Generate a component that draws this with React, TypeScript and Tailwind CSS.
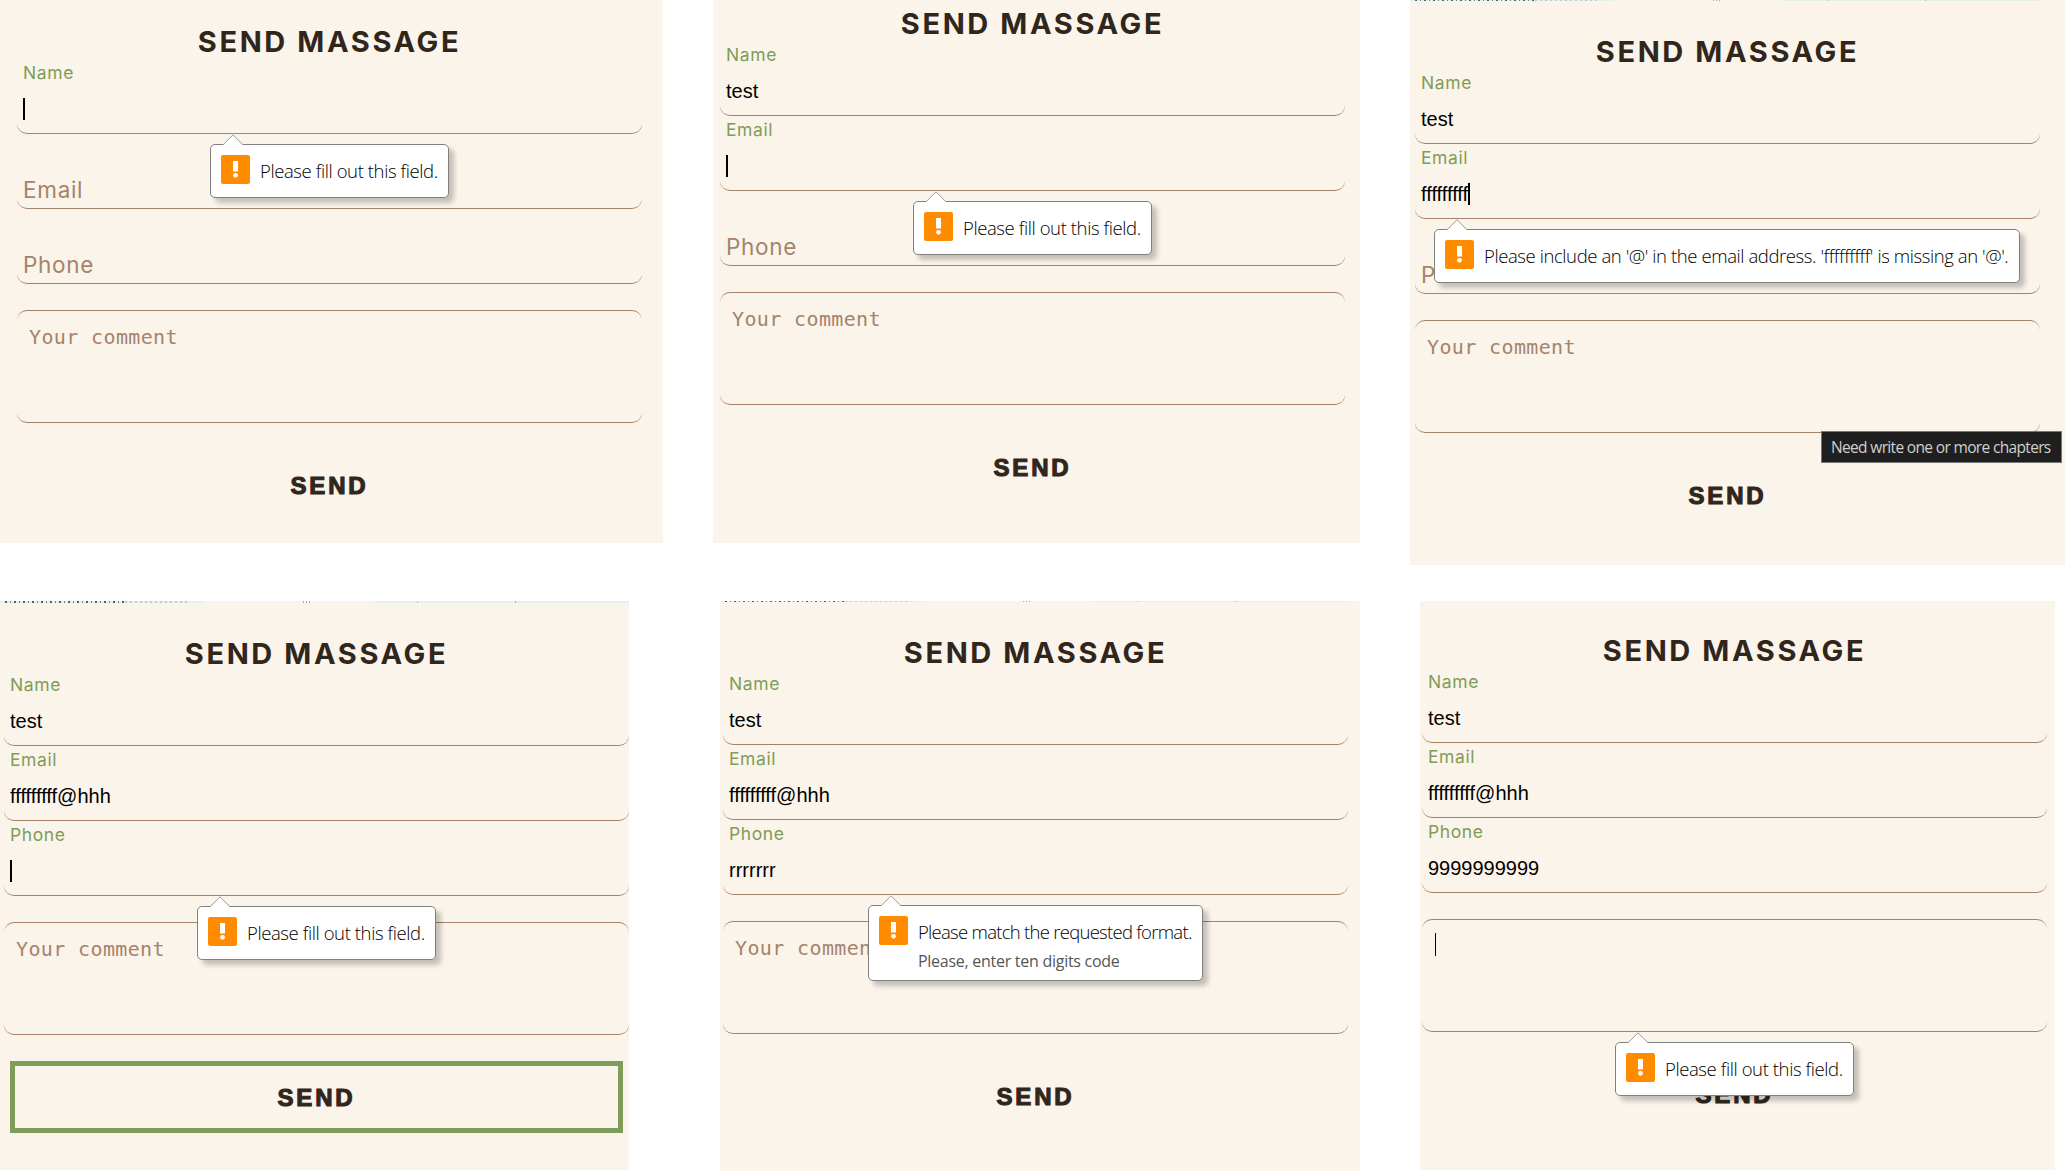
import type { ReactNode } from "react";

function Caret() {
  return <span className="h-[22px] w-[2px] bg-black" />;
}

function Field({ label, value, active = true, caret = false, children }: {
  label: string; value?: string; active?: boolean; caret?: boolean; children?: ReactNode;
}) {
  return (
    <div className="relative h-[75px] rounded-[10px] border-b border-[#a5836a] px-[6px]">
      {active ? (
        <>
          <div className="h-[28px] font-['Inter'] text-[17.5px] leading-[28px] tracking-[0.6px] text-[#7f9c58]">{label}</div>
          <div className="flex h-[44px] items-center font-['Liberation_Sans'] text-[20px] leading-[44px] text-black">
            {value && <span>{value}</span>}
            {caret && <Caret />}
          </div>
        </>
      ) : (
        <div className="pt-[38px] font-['Inter'] text-[22.5px] leading-[36px] tracking-[0.7px] text-[#a5836a]">{label}</div>
      )}
      {children}
    </div>
  );
}

function Bubble({ text, note, className }: { text: string; note?: string; className: string }) {
  return (
    <div className={`absolute z-10 rounded-[5px] border border-[#808080] bg-white shadow-[5px_5px_5px_rgba(0,0,0,0.22)] ${className}`}>
      <svg className="absolute -top-[11px] left-[11px]" width="22" height="12" viewBox="0 0 22 12">
        <path d="M1 12V11L11 0.8L21 11V12Z" fill="#fff" />
        <path d="M1 10.8L11 0.8L21 10.8" fill="none" stroke="#9a9a9a" />
      </svg>
      <div className="flex pl-[10px] pt-[10px]">
        <svg className="shrink-0" width="29" height="29" viewBox="0 0 29 29">
          <rect width="29" height="29" rx="2" fill="#ff8c00" />
          <path d="M12 6h5v10.5h-5z" fill="#fff" />
          <circle cx="14.5" cy="20.3" r="2.4" fill="#fff" />
        </svg>
        <div className="-mt-px ml-[10px] whitespace-nowrap font-['Open_Sans'] text-black">
          <div className="text-[18.5px] leading-[34px] [font-weight:350]">{text}</div>
          {note && <div className="mt-px text-[16px] leading-[22px] tracking-[-0.27px] text-[#555]">{note}</div>}
        </div>
      </div>
    </div>
  );
}

function Title() {
  return (
    <h2 className="h-[35px] text-center font-['Inter'] text-[29px] font-bold leading-[35px] tracking-[2.6px] text-[#30261c]">
      SEND MASSAGE
    </h2>
  );
}

function Comment({ caret = false, children }: { caret?: boolean; children?: ReactNode }) {
  return (
    <div className="relative mt-[26px] h-[113px] rounded-[10px] border-y border-[#a5836a] px-[12px] pt-[12px]">
      {caret ? (
        <div className="ml-[1px] mt-px h-[23px] w-px bg-black" />
      ) : (
        <div className="font-['DejaVu_Sans_Mono'] text-[20px] leading-[29px] tracking-[0.37px] text-[#a5836a]">Your comment</div>
      )}
      {children}
    </div>
  );
}

function Send({ outlined = false }: { outlined?: boolean }) {
  return (
    <button
      className={`mx-[6px] mt-[26px] flex h-[72px] w-[613px] items-center justify-center border-[5px] pt-[2px] font-['Liberation_Sans'] text-[24px] font-bold tracking-[2.8px] text-[#30261c] [-webkit-text-stroke:1.1px_#30261c] ${outlined ? "border-[#7f9c58]" : "border-transparent"}`}
    >
      SEND
    </button>
  );
}

function Sliver({ className }: { className: string }) {
  return (
    <div className={`absolute left-0 top-0 flex overflow-hidden bg-[#e6f0ea] ${className}`}>
      <div className="w-[5px]" />
      <div className="w-[120px] bg-[repeating-linear-gradient(90deg,#4f6469_0_2px,#e6f0ea_2px_5px,#71858a_5px_6px,#e6f0ea_6px_9px)]" />
      <div className="w-[62px] bg-[repeating-linear-gradient(90deg,#c3cccf_0_2px,#e6f0ea_2px_5px)]" />
      <div className="w-[16px]" />
      <div className="w-[100px] bg-[#f4f4f2]" />
      <div className="w-[8px] bg-[repeating-linear-gradient(90deg,#a9a9a9_0_1px,#f4f4f2_1px_3px)]" />
      <div className="w-[64px] bg-[#f4f4f2]" />
      <div className="w-[42px]" />
      <div className="w-px bg-[#b9c4be]" />
      <div className="w-[97px]" />
      <div className="w-px bg-[#a9b4ae]" />
    </div>
  );
}

const FILL = "Please fill out this field.";

export default function App() {
  return (
    <main className="flex h-[1171px] w-[2065px] flex-col gap-[36px] overflow-hidden bg-white">
      <div className="flex h-[565px] items-start">
        <section className="h-[543px] w-[663px] bg-[#fbf4ea] pl-[17px] pt-[24px]">
          <div className="w-[625px]">
            <Title />
            <Field label="Name" caret>
              <Bubble text={FILL} className="left-[193px] top-[85px] h-[54px] w-[239px] tracking-[-0.4px]" />
            </Field>
            <Field label="Email" active={false} />
            <Field label="Phone" active={false} />
            <Comment />
            <Send />
          </div>
        </section>
        <section className="ml-[50px] h-[543px] w-[647px] bg-[#fbf4ea] pl-[7px] pt-[6px]">
          <div className="w-[625px]">
            <Title />
            <Field label="Name" value="test" />
            <Field label="Email" caret>
              <Bubble text={FILL} className="left-[193px] top-[85px] h-[54px] w-[239px] tracking-[-0.4px]" />
            </Field>
            <Field label="Phone" active={false} />
            <Comment />
            <Send />
          </div>
        </section>
        <section className="relative ml-[50px] h-[565px] w-[655px] bg-[#fbf4ea] pl-[5px] pt-[34px]">
          <Sliver className="h-px w-[630px]" />
          <div className="w-[625px]">
            <Title />
            <Field label="Name" value="test" />
            <Field label="Email" value="fffffffff" caret>
              <Bubble
                text="Please include an '@' in the email address. 'fffffffff' is missing an '@'."
                className="left-[19px] top-[85px] h-[54px] w-[586px] tracking-[-0.41px]"
              />
            </Field>
            <Field label="Phone" active={false} />
            <Comment>
              <div className="absolute left-[406px] top-[110px] h-[32px] w-[241px] whitespace-nowrap border border-[#767676] bg-[#1f1f1f] pl-[9px] font-['Open_Sans'] text-[15.5px] leading-[30px] tracking-[-0.66px] text-[#cfcfcf]">
                Need write one or more chapters
              </div>
            </Comment>
            <Send />
          </div>
        </section>
      </div>
      <div className="flex h-[570px] items-start">
        <section className="relative h-[569px] w-[629px] bg-[#fbf4ea] pl-[4px] pt-[35px]">
          <Sliver className="h-[2px] w-[629px]" />
          <div className="w-[625px]">
            <Title />
            <Field label="Name" value="test" />
            <Field label="Email" value="fffffffff@hhh" />
            <Field label="Phone" caret>
              <Bubble text={FILL} className="left-[193px] top-[85px] h-[54px] w-[239px] tracking-[-0.4px]" />
            </Field>
            <Comment />
            <Send outlined />
          </div>
        </section>
        <section className="relative ml-[91px] h-[570px] w-[640px] bg-[#fbf4ea] pl-[3px] pt-[34px]">
          <Sliver className="h-px w-[628px]" />
          <div className="w-[625px]">
            <Title />
            <Field label="Name" value="test" />
            <Field label="Email" value="fffffffff@hhh" />
            <Field label="Phone" value="rrrrrrr">
              <Bubble
                text="Please match the requested format."
                note="Please, enter ten digits code"
                className="left-[145px] top-[85px] h-[76px] w-[335px] tracking-[-0.72px]"
              />
            </Field>
            <Comment />
            <Send />
          </div>
        </section>
        <section className="ml-[60px] h-[569px] w-[635px] bg-[#fbf4ea] pl-[2px] pt-[32px]">
          <div className="w-[625px]">
            <Title />
            <Field label="Name" value="test" />
            <Field label="Email" value="fffffffff@hhh" />
            <Field label="Phone" value="9999999999" />
            <Comment caret>
              <Bubble text={FILL} className="left-[193px] top-[122px] h-[54px] w-[239px] tracking-[-0.4px]" />
            </Comment>
            <Send />
          </div>
        </section>
      </div>
    </main>
  );
}
